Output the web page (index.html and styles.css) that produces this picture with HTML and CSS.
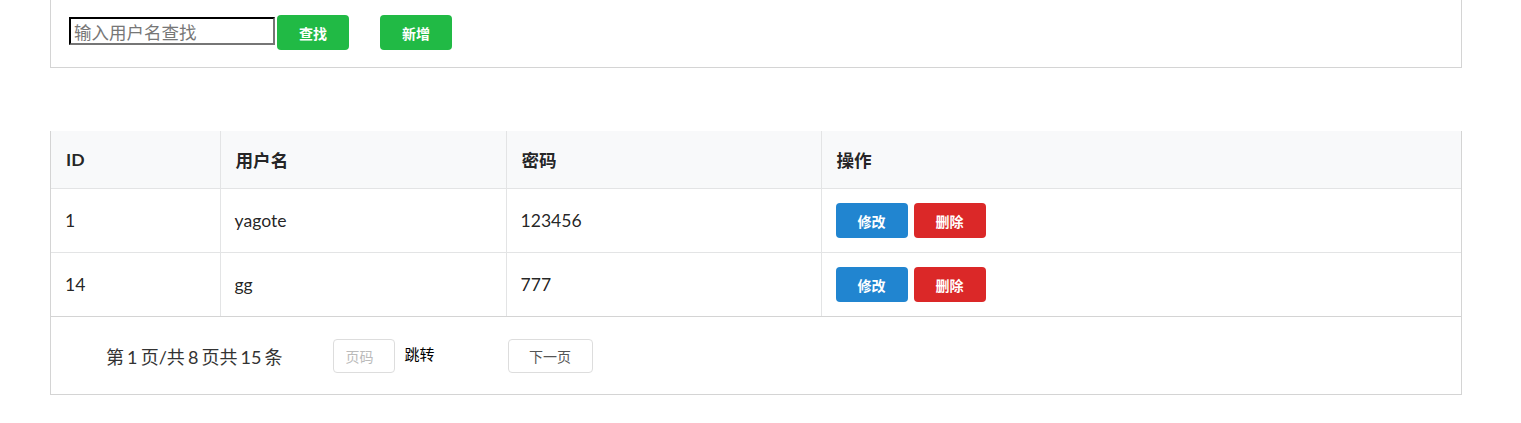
FILE: index.html
```html
<!DOCTYPE html>
<html lang="zh-CN">
<head>
<meta charset="utf-8">
<title>用户管理</title>
<link rel="stylesheet" href="styles.css">
</head>
<body>
<div class="page">
  <div class="search-card">
    <input class="search-input" type="text" placeholder="输入用户名查找">
    <button class="btn btn-green btn-search">查找</button>
    <button class="btn btn-green btn-add">新增</button>
  </div>

  <div class="table-card">
    <table class="user-table">
      <thead>
        <tr>
          <th class="col-id">ID</th>
          <th class="col-name">用户名</th>
          <th class="col-pwd">密码</th>
          <th class="col-op">操作</th>
        </tr>
      </thead>
      <tbody>
        <tr>
          <td>1</td>
          <td>yagote</td>
          <td>123456</td>
          <td><div class="ops"><button class="btn btn-blue">修改</button><button class="btn btn-red">删除</button></div></td>
        </tr>
        <tr>
          <td>14</td>
          <td>gg</td>
          <td>777</td>
          <td><div class="ops"><button class="btn btn-blue">修改</button><button class="btn btn-red">删除</button></div></td>
        </tr>
      </tbody>
    </table>
    <div class="pager">
      <span class="pager-info">第 1 页/共 8 页共 15 条</span>
      <input class="page-input" type="text" placeholder="页码">
      <span class="jump">跳转</span>
      <button class="next-btn">下一页</button>
    </div>
  </div>
</div>
</body>
</html>
```

FILE: styles.css
```css
* { box-sizing: border-box; }

body {
  margin: 0;
  background: #fff;
  font-family: Lato, "Noto Sans CJK SC", sans-serif;
  color: rgba(0, 0, 0, 0.87);
}

.page {
  width: 1412px;
  margin-left: 50px;
}

.search-card {
  height: 68px;
  border: 1px solid #d4d4d4;
  border-top: none;
  display: flex;
  align-items: flex-start;
  padding-left: 18px;
}

.search-input {
  margin-top: 17px;
  width: 206px;
  height: 28px;
  border: 2px inset #767676;
  border-top-color: #222;
  border-left-color: #222;
  padding: 0 3px;
  font-family: "Noto Sans CJK SC", sans-serif;
  font-size: 17.5px;
  color: #333;
  outline: none;
}
.search-input::placeholder { color: #777; }

.btn {
  border: none;
  border-radius: 4px;
  width: 72px;
  height: 35px;
  color: #fff;
  font-family: Lato, "Noto Sans CJK SC", sans-serif;
  font-weight: bold;
  font-size: 14px;
  padding: 0;
  cursor: pointer;
}
.btn-green { background: #21ba45; }
.btn-blue { background: #2185d0; }
.btn-red { background: #db2828; }

.btn-search { margin-top: 15px; margin-left: 2px; }
.btn-add { margin-top: 15px; margin-left: 31px; }

.table-card {
  margin-top: 63px;
  border: 1px solid #d4d4d4;
  border-top: none;
}

.user-table {
  width: 100%;
  border-collapse: collapse;
  font-size: 17.6px;
}

.user-table th {
  background: #f8f9fa;
  height: 57px;
  text-align: left;
  font-weight: bold;
  padding: 0 15px;
  border-bottom: 1px solid #e3e4e5;
  border-left: 1px solid #e3e4e5;
}
.user-table th:first-child, .user-table td:first-child { border-left: none; }

.user-table td {
  height: 64px;
  padding: 0 14px;
  border-bottom: 1px solid #e3e4e5;
  border-left: 1px solid #e3e4e5;
  vertical-align: middle;
}
.user-table tbody tr:last-child td { border-bottom: 1px solid #d4d4d4; }

.col-id { width: 169px; }
.col-name { width: 286px; }
.col-pwd { width: 315px; }

.ops { display: flex; gap: 6px; padding-top: 1px; }

.pager {
  height: 77px;
  display: flex;
  align-items: center;
  padding-left: 55px;
  padding-top: 1px;
}

.pager-info {
  font-family: Lato, "Noto Sans CJK SC", sans-serif;
  font-size: 18px;
  color: #333;
  word-spacing: -1.5px;
}

.page-input {
  margin-left: 50px;
  width: 62px;
  height: 34px;
  border: 1px solid #ddd;
  border-radius: 4px;
  padding: 0 12px;
  font-family: "Noto Sans CJK SC", sans-serif;
  font-size: 14px;
  outline: none;
}
.page-input::placeholder { color: #bbb; }

.jump {
  margin-left: 10px;
  margin-bottom: 4px;
  font-family: "Noto Sans CJK SC", sans-serif;
  font-size: 15px;
  color: #000;
}

.next-btn {
  margin-left: 73px;
  width: 85px;
  height: 34px;
  background: #fff;
  border: 1px solid #ddd;
  border-radius: 4px;
  font-family: "Noto Sans CJK SC", sans-serif;
  font-size: 14px;
  color: #555;
  padding: 0;
}
```
